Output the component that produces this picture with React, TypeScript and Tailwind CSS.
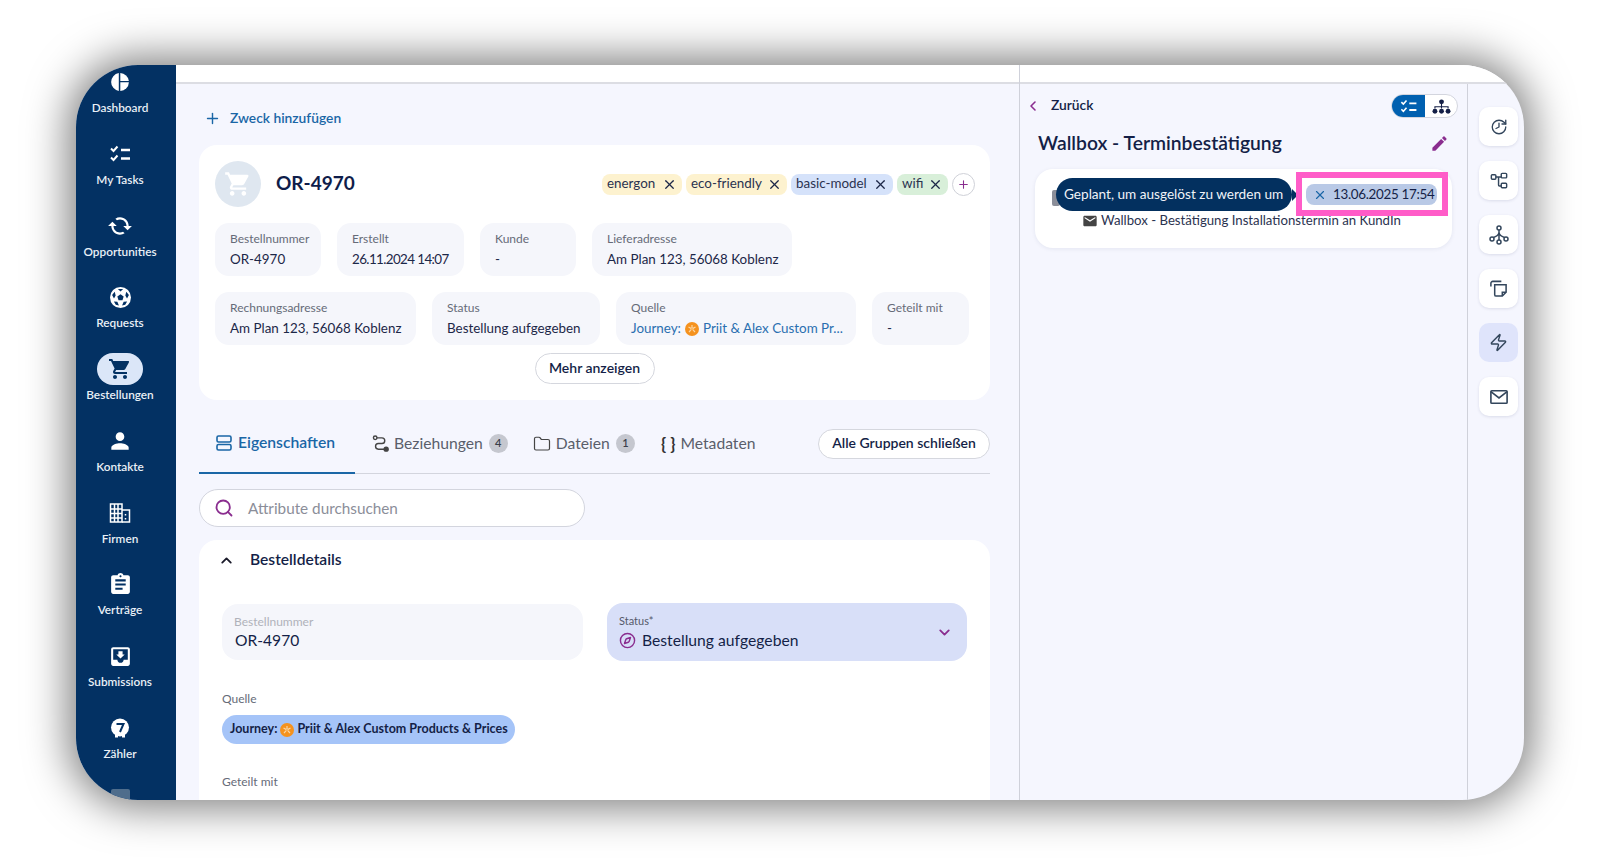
import React from "react";
import { Plus, X, ChevronUp, ChevronDown, ChevronLeft, Search, Folder, Zap, Compass, History } from "lucide-react";
import {
  MdShoppingCart, MdPerson, MdAssignment, MdMoveToInbox, MdCached, MdEdit, MdEmail,
} from "react-icons/md";

const Tasks = ({ className }: { className?: string }) => (
  <svg viewBox="0 0 24 24" className={className} fill="none" stroke="currentColor" strokeWidth="2">
    <path d="M3 6.5l2.5 2.5L9.5 4.5M3 15.5l2.5 2.500 4-4.500" />
    <path d="M13 8h9M13 16.500h9" strokeWidth="2.4" />
  </svg>
);

const Pie = () => (
  <svg viewBox="0 0 18 18" className="h-[18px] w-[18px]">
    <path d="M7.8 0.1A9 9 0 0 0 7.8 17.9Z" fill="#fff" />
    <path d="M9.3 0.1A9 9 0 0 1 17.9 7.9H9.3Z" fill="#fff" />
    <path d="M9.3 9.2H17.9A9 9 0 0 1 9.3 17.9Z" fill="#fff" />
  </svg>
);

const Ball = () => (
  <svg viewBox="0 0 20 20" className="h-[21px] w-[21px]">
    <circle cx="10" cy="10" r="10" fill="#fff" />
    <path d="M10 6.800l3 2.200-1.100 3.500H8.100L7 9z" fill="#033163" />
    <path d="M7.500 1.800h5L10 4.200zM2 7.500l2.500-3 .9 3.500-1.600 3zM18 7.500l-2.500-3-.9 3.500 1.600 3zM5.500 17l-1.800-3.300 3.300.4 1.500 3.500zM14.500 17l1.800-3.300-3.300.4-1.500 3.500z" fill="#033163" />
  </svg>
);

const Building = () => (
  <svg viewBox="0 0 24 24" className="h-[24px] w-[24px]" fill="none" stroke="#fff" strokeWidth="1.5">
    <rect x="2.500" y="3" width="11.500" height="18" />
    <path d="M14 9h7.500v12H14M2.500 8h11.500M2.500 12.500h11.500M2.500 17h11.500M6.500 3v18M10 3v18" />
    <path d="M17.500 13v1.500M17.500 17v1.500" />
  </svg>
);

const Counter = () => (
  <svg viewBox="0 0 20 20" className="h-[20px] w-[20px]">
    <circle cx="10" cy="9.500" r="9" fill="#fff" />
    <rect x="5" y="16" width="3" height="3.500" fill="#fff" />
    <rect x="12" y="16" width="3" height="3.500" fill="#fff" />
    <path d="M6.500 6h7l-3.500 8" fill="none" stroke="#033163" strokeWidth="2" />
  </svg>
);

const Nav = ({ icon, label, active }: { icon: React.ReactNode; label: string; active?: boolean }) => (
  <div className="flex h-[71.75px] shrink-0 flex-col items-center">
    <div className={`flex h-[32px] w-[46px] items-center justify-center rounded-full ${active ? "bg-[#dbe6f8]" : ""}`}>{icon}</div>
    <div className="mt-px text-[11.8px] leading-[18px] font-semibold whitespace-nowrap text-[#e9eff6]">{label}</div>
  </div>
);

const Info = ({ label, children, className }: { label: string; children: React.ReactNode; className: string }) => (
  <div className={`flex h-[53px] shrink-0 flex-col justify-center rounded-[14px] bg-[#f5f6fb] px-[15px] ${className}`}>
    <div className="text-[12px] leading-[16px] whitespace-nowrap text-[#666b78]">{label}</div>
    <div className="mt-[4px] text-[13.4px] leading-[17px] whitespace-nowrap text-[#1c2748]">{children}</div>
  </div>
);

const Tag = ({ label, bg, className }: { label: string; bg: string; className: string }) => (
  <div className={`flex h-[21px] items-center justify-between rounded-[8px] pr-[5px] pl-[5px] text-[13.4px] text-[#2b3350] ${bg} ${className}`}>
    <span className="-mt-[2px]">{label}</span>
    <X className="h-[15px] w-[15px] text-[#1c2748]" strokeWidth={2} />
  </div>
);

const Journey = ({ size }: { size: string }) => (
  <svg viewBox="0 0 14 14" className={`${size} shrink-0`}>
    <circle cx="7" cy="7" r="7" fill="#f5921e" />
    <path d="M7 3v3M4 10l2.400-2.600M10 10L7.600 7.400M3.500 5l3 1.600M10.500 5l-3 1.600" stroke="#fbd6a3" strokeWidth="1.2" />
  </svg>
);

const Badge = ({ n }: { n: string }) => (
  <span className="flex h-[19px] w-[19px] items-center justify-center rounded-full bg-[#c5c7cf] text-[11px] font-semibold text-[#3b3f4a]">{n}</span>
);

const RailBtn = ({ children, active }: { children: React.ReactNode; active?: boolean }) => (
  <div className={`flex h-[39px] w-[39px] items-center justify-center rounded-[10px] text-[#33465c] ${active ? "bg-[#dfe4fb]" : "bg-white shadow-[0_1px_3px_rgba(30,40,90,0.12)]"}`}>{children}</div>
);

const TopBar = () => <div className="h-[19px] shrink-0 border-b-2 border-[#dcdde3] bg-white" />;

export default function App() {
  return (
    <div className="h-[866px] w-[1600px] overflow-hidden bg-white pt-[65px] pl-[76px] font-['Lato','Liberation_Sans',sans-serif]">
      <div className="flex h-[735px] w-[1448px] overflow-hidden rounded-[62px] bg-[#f5f6fe] shadow-[0_0_42px_8px_rgba(0,0,0,0.5)]">
        {/* Sidebar */}
        <div className="flex h-full w-[100px] shrink-0 flex-col overflow-hidden bg-[#033163] pt-px pr-[12px]">
          <Nav icon={<Pie />} label="Dashboard" />
          <Nav icon={<Tasks className="h-[24px] w-[24px] text-white" />} label="My Tasks" />
          <Nav icon={<MdCached className="h-[26px] w-[26px] -scale-x-100 text-white" />} label="Opportunities" />
          <Nav icon={<Ball />} label="Requests" />
          <Nav icon={<MdShoppingCart className="h-[24px] w-[24px] text-[#033163]" />} label="Bestellungen" active />
          <Nav icon={<MdPerson className="h-[26px] w-[26px] text-white" />} label="Kontakte" />
          <Nav icon={<Building />} label="Firmen" />
          <Nav icon={<MdAssignment className="h-[25px] w-[25px] text-white" />} label="Verträge" />
          <Nav icon={<MdMoveToInbox className="h-[25px] w-[25px] text-white" />} label="Submissions" />
          <Nav icon={<Counter />} label="Zähler" />
          <Nav icon={<div className="h-[22px] w-[19px] rounded-[2px] bg-[#4f6d8c]" />} label="" />
        </div>

        {/* Main column */}
        <div className="flex h-full w-[843px] shrink-0 flex-col">
          <TopBar />
          <div className="flex min-h-0 flex-1 flex-col pt-[23px] pr-[29px] pl-[23px]">
            <div className="flex h-[22px] shrink-0 items-center pl-[5px] text-[13.8px] font-semibold text-[#1a66a6]">
              <Plus className="h-[17px] w-[17px]" strokeWidth={2} />
              <span className="ml-[9px]">Zweck hinzufügen</span>
            </div>

            <div className="mt-[16px] h-[255px] shrink-0 rounded-[18px] bg-white px-[16px] pt-[16px]">
              <div className="flex h-[46px] items-center">
                <div className="flex h-[46px] w-[46px] items-center justify-center rounded-full bg-[#dfe7f0]">
                  <MdShoppingCart className="h-[28px] w-[28px] text-white" />
                </div>
                <div className="-mt-[2px] ml-[15px] text-[19px] font-bold text-[#0f1d4a]">OR-4970</div>
                <div className="mr-[-1px] ml-auto flex items-center gap-[4px]">
                  <Tag label="energon" bg="bg-[#fdf2cf]" className="w-[80px]" />
                  <Tag label="eco-friendly" bg="bg-[#fdf2cf]" className="w-[101px]" />
                  <Tag label="basic-model" bg="bg-[#d5e2fa]" className="w-[102px]" />
                  <Tag label="wifi" bg="bg-[#d8efd9]" className="w-[51px]" />
                  <div className="flex h-[23px] w-[23px] items-center justify-center rounded-full border border-[#cfd1d8]">
                    <Plus className="h-[13px] w-[13px] text-[#8a2d8f]" strokeWidth={2} />
                  </div>
                </div>
              </div>
              <div className="mt-[16px] flex gap-[16px]">
                <Info label="Bestellnummer" className="w-[106px]">OR-4970</Info>
                <Info label="Erstellt" className="w-[127px]"><span className="tracking-[-0.6px]">26.11.2024 14:07</span></Info>
                <Info label="Kunde" className="w-[96px]">-</Info>
                <Info label="Lieferadresse" className="w-[200px]">Am Plan 123, 56068 Koblenz</Info>
              </div>
              <div className="mt-[16px] flex gap-[16px]">
                <Info label="Rechnungsadresse" className="w-[201px]">Am Plan 123, 56068 Koblenz</Info>
                <Info label="Status" className="w-[168px]">Bestellung aufgegeben</Info>
                <Info label="Quelle" className="w-[240px]">
                  <span className="flex items-center gap-[4px] text-[#2a6fb0]">
                    Journey: <Journey size="h-[14px] w-[14px]" /> Priit &amp; Alex Custom Pr...
                  </span>
                </Info>
                <Info label="Geteilt mit" className="w-[97px]">-</Info>
              </div>
              <div className="mt-[8px] flex justify-center">
                <div className="flex h-[31px] w-[120px] items-center justify-center rounded-full border border-[#d5d7de] pb-[2px] text-[14px] font-semibold text-[#141f47]">Mehr anzeigen</div>
              </div>
            </div>

            {/* Tabs */}
            <div className="mt-[24px] flex h-[50px] shrink-0 items-stretch border-b border-[#d3d5de] text-[15.7px] text-[#5a5e6b]">
              <div className="-mb-px flex w-[156px] items-center border-b-2 border-[#1a66a6] pb-[10px] pl-[17px] font-semibold text-[#1a66a6]">
                <svg viewBox="0 0 16 16" className="h-[16px] w-[16px]" fill="none" stroke="currentColor" strokeWidth="1.6">
                  <rect x="1" y="1" width="14" height="6" rx="1.5" />
                  <rect x="1" y="9.5" width="14" height="5.5" rx="1.5" />
                </svg>
                <span className="ml-[6px]">Eigenschaften</span>
              </div>
              <div className="ml-[17px] flex items-center pb-[10px]">
                <svg viewBox="0 0 24 24" className="h-[17px] w-[17px] text-[#444]" fill="none" stroke="currentColor" strokeWidth="2">
                  <circle cx="4.5" cy="4" r="2.5" />
                  <circle cx="20" cy="20" r="2.8" fill="currentColor" />
                  <path d="M7 4h7a4 4 0 0 1 0 8H9a4 4 0 0 0 0 8h8" />
                </svg>
                <span className="ml-[5px]">Beziehungen</span>
                <span className="ml-[6px]"><Badge n="4" /></span>
              </div>
              <div className="ml-[25px] flex items-center pb-[10px]">
                <Folder className="h-[18px] w-[18px] text-[#444]" strokeWidth={1.6} />
                <span className="ml-[5px]">Dateien</span>
                <span className="ml-[6px]"><Badge n="1" /></span>
              </div>
              <div className="ml-[26px] flex items-center pb-[10px]">
                <span className="text-[17px] font-bold text-[#333]">{"{ }"}</span>
                <span className="ml-[5px]">Metadaten</span>
              </div>
              <div className="ml-auto flex items-center pb-[10px]">
                <div className="flex h-[30px] w-[172px] items-center justify-center rounded-full border border-[#d5d7de] bg-white pb-[2px] text-[14px] font-semibold text-[#141f47]">Alle Gruppen schließen</div>
              </div>
            </div>

            <div className="mt-[15px] flex h-[38px] w-[386px] shrink-0 items-center rounded-[19px] border border-[#d3d5de] bg-white pl-[14px] text-[15.3px] text-[#8b8e99]">
              <Search className="h-[20px] w-[20px] text-[#8a2d8f]" strokeWidth={2.2} />
              <span className="ml-[14px]">Attribute durchsuchen</span>
            </div>

            <div className="mt-[13px] min-h-0 flex-1 overflow-hidden rounded-t-[18px] bg-white">
              <div className="mt-[10px] flex h-[20px] items-center pl-[19px]">
                <ChevronUp className="h-[17px] w-[17px] text-[#1a1a2a]" strokeWidth={2.6} />
                <span className="ml-[15px] text-[15.6px] font-semibold text-[#141f47]">Bestelldetails</span>
              </div>
              <div className="mt-[33px] flex h-[58px] items-center gap-[24px] px-[23px]">
                <div className="flex h-[56px] w-[361px] flex-col justify-center rounded-[16px] bg-[#f5f6fb] pl-[12px]">
                  <div className="text-[12px] leading-[14px] text-[#b0b2ba]">Bestellnummer</div>
                  <div className="mt-[1px] pl-[1px] text-[15.6px] leading-[20px] text-[#141f47]">OR-4970</div>
                </div>
                <div className="flex h-[58px] w-[360px] items-center rounded-[16px] bg-[#d8dff8] pr-[14px] pl-[12px]">
                  <div className="flex-1">
                    <div className="text-[11px] leading-[14px] text-[#55596a]">Status*</div>
                    <div className="mt-[2px] flex items-center text-[15.7px] leading-[20px] text-[#141f47]">
                      <Compass className="h-[17px] w-[17px] text-[#8a2d8f]" strokeWidth={2} />
                      <span className="ml-[6px]">Bestellung aufgegeben</span>
                    </div>
                  </div>
                  <ChevronDown className="h-[17px] w-[17px] text-[#8a2d8f]" strokeWidth={2.6} />
                </div>
              </div>
              <div className="mt-[31px] pl-[23px] text-[12px] leading-[14px] text-[#666b78]">Quelle</div>
              <div className="mt-[9px] ml-[23px] flex h-[29px] w-[293px] items-center gap-[3px] rounded-full bg-[#a5c4f8] pl-[8px] text-[12.5px] font-bold text-[#141f47]">
                Journey: <Journey size="h-[14px] w-[14px]" /> Priit &amp; Alex Custom Products &amp; Prices
              </div>
              <div className="mt-[31px] pl-[23px] text-[12px] leading-[14px] text-[#666b78]">Geteilt mit</div>
            </div>
          </div>
        </div>

        {/* Right column */}
        <div className="flex h-full w-[448px] shrink-0 flex-col border-l border-[#cfd1da]">
          <TopBar />
          <div className="flex min-h-0 flex-1 flex-col">
            <div className="mt-[10px] flex h-[24px] items-center pr-[9px] pl-[5px]">
              <ChevronLeft className="h-[16px] w-[16px] text-[#8a2d8f]" strokeWidth={2.4} />
              <span className="-mt-[1px] ml-[10px] text-[13.8px] font-semibold text-[#141f47]">Zurück</span>
              <div className="ml-auto flex h-[24px] w-[67px] overflow-hidden rounded-full border border-[#d3d5de] bg-white">
                <div className="flex w-[33px] items-center justify-center bg-[#0060b0]">
                  <Tasks className="h-[19px] w-[19px] text-white" />
                </div>
                <div className="flex flex-1 items-center justify-center">
                  <svg viewBox="0 0 20 16" className="h-[15px] w-[19px] text-[#141f47]" fill="currentColor">
                    <circle cx="10" cy="3" r="2.6" />
                    <circle cx="3" cy="13" r="2.6" /><circle cx="10" cy="13" r="2.6" /><circle cx="17" cy="13" r="2.6" />
                    <path d="M9.4 5h1.2v2.6H17.6V10h-1.2V8.8H10.6V10H9.4V8.8H3.6V10H2.4V7.6H9.4z" />
                  </svg>
                </div>
              </div>
            </div>
            <div className="mt-[11px] flex h-[28px] items-center pr-[18px] pl-[18px]">
              <span className="text-[19.3px] font-semibold text-[#141f47]">Wallbox - Terminbestätigung</span>
              <MdEdit className="ml-auto h-[19px] w-[19px] text-[#8a2d8f]" />
            </div>
            <div className="relative mt-[12px] mr-[15px] ml-[15px] h-[79px] rounded-[18px] bg-white shadow-[0_1px_4px_rgba(30,40,90,0.08)]">
              <div className="absolute top-[21px] left-[17px] h-[16px] w-[8px] rounded-[2px] bg-[#8b8e99]" />
              <div className="relative flex items-center pt-[9px] pl-[21px]">
                <div className="relative flex h-[33px] w-[236px] items-center rounded-full bg-[#03305f] pb-[1px] pl-[8px] text-[13.6px] whitespace-nowrap text-[#f0f3f8]">
                  Geplant, um ausgelöst zu werden um
                  <div className="absolute top-[11px] right-[-6px] h-0 w-0 border-y-[6px] border-l-[6px] border-y-transparent border-l-[#03305f]" />
                </div>
                <div className="ml-[14px] flex h-[21px] w-[131px] items-center rounded-[8px] bg-[#b9c9e6] pl-[7px] text-[13.4px] whitespace-nowrap text-[#141f47]">
                  <X className="h-[14px] w-[14px] text-[#1a66a6]" strokeWidth={2} />
                  <span className="-mt-[1px] ml-[6px] tracking-[-0.3px]">13.06.2025 17:54</span>
                </div>
              </div>
              <div className="mt-px flex h-[18px] items-center pl-[47px] text-[13.2px] text-[#2b3350]">
                <MdEmail className="h-[16px] w-[16px] text-[#444]" />
                <span className="-mt-[1px] ml-[3px]">Wallbox - Bestätigung Installationstermin an KundIn</span>
              </div>
              <div className="absolute top-[3px] left-[261px] h-[44px] w-[152px] border-[6px] border-[#ff5cc8]" />
            </div>
          </div>
        </div>

        {/* Rail */}
        <div className="flex h-full flex-1 flex-col">
          <TopBar />
          <div className="flex flex-1 flex-col gap-[15px] border-l border-[#cfd1da] pt-[23px] pl-[11px]">
            <RailBtn><History className="h-[18px] w-[18px] -scale-x-100" strokeWidth={1.8} /></RailBtn>
            <RailBtn>
              <svg viewBox="0 0 20 20" className="h-[18px] w-[18px]" fill="none" stroke="currentColor" strokeWidth="1.6">
                <rect x="1.5" y="3" width="5" height="5" rx="1" />
                <rect x="12.5" y="1.5" width="6" height="5" rx="1" />
                <rect x="12.5" y="12.5" width="6" height="5" rx="1" />
                <path d="M6.5 5.5h6M9.5 5.5v9a1 1 0 0 0 1 1h2" />
              </svg>
            </RailBtn>
            <RailBtn>
              <svg viewBox="0 0 20 20" className="h-[20px] w-[20px]" fill="none" stroke="currentColor" strokeWidth="1.5">
                <circle cx="10" cy="3" r="2" /><circle cx="3" cy="14" r="2" /><circle cx="10" cy="17" r="2" /><circle cx="17" cy="14" r="2" />
                <path d="M10 5v10M10 7c0 4-3 4-5.5 5.5M10 7c0 4 3 4 5.5 5.5" />
              </svg>
            </RailBtn>
            <RailBtn>
              <svg viewBox="0 0 20 20" className="h-[19px] w-[19px]" fill="none" stroke="currentColor" strokeWidth="1.6">
                <path d="M6 6h12v8l-4 4H7.500A1.500 1.500 0 0 1 6 16.500z" />
                <path d="M2 8V4.500A2 2 0 0 1 4 2.500h9M18 14h-4v4" />
              </svg>
            </RailBtn>
            <RailBtn active><Zap className="h-[19px] w-[19px]" strokeWidth={1.8} /></RailBtn>
            <RailBtn>
              <svg viewBox="0 0 20 16" className="h-[16px] w-[18px]" fill="none" stroke="currentColor" strokeWidth="1.8">
                <rect x="1" y="1" width="18" height="14" rx="1" />
                <path d="M1 2l9 7 9-7" />
              </svg>
            </RailBtn>
          </div>
        </div>
      </div>
    </div>
  );
}
